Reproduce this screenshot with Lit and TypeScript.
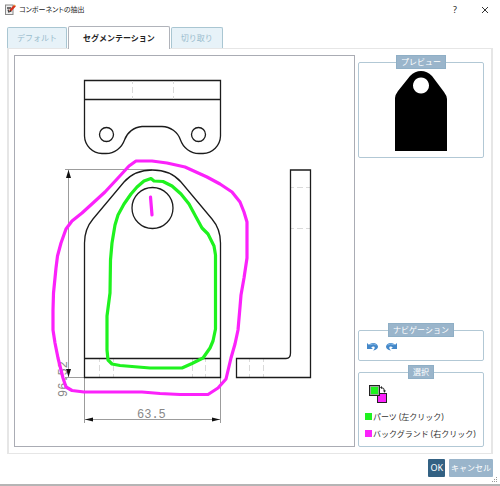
import { LitElement, html, css, svg } from "lit";
import { customElement, state } from "lit/decorators.js";

const UI_FONT = css`"Noto Sans", "Noto Sans CJK JP", sans-serif`;

/** Orthographic drawing with the user's brush strokes over it. */
@customElement("drawing-canvas")
class DrawingCanvas extends LitElement {
  static styles = css`
    :host { display: flex; border: 1px solid #aaacb4; background: #fff; min-width: 0; }
    .sheet { flex: 1; width: 100%; min-height: 0; display: block; }
    .edge { fill: none; stroke: #1c1c1c; stroke-width: 1.3; }
    .hidden { fill: none; stroke: #dadada; stroke-width: 1; stroke-dasharray: 6 3; stroke-dashoffset: 3; }
    .dim { fill: none; stroke: #9c9c9c; stroke-width: 1; }
    .arrow { fill: #111; }
    .label { font: 12px "Liberation Mono", monospace; fill: #888; }
    .stroke { fill: none; stroke-width: 3.2; stroke-linejoin: round; stroke-linecap: round; }
    .part { stroke: #1ff21f; }
    .ground { stroke: #fb22fb; }
  `;

  render() {
    return html`
      <svg class="sheet" viewBox="15 56 339 390" role="img" aria-label="96.52 × 63.5">
        ${svg`
        <path class="edge" d="M84.5 80.5H220.5V136A18 18 0 0 1 203 153.5H199A20 20 0 0 1 180.5 140A20 20 0 0 0 162 126.5H142A20 20 0 0 0 124.5 140A20 20 0 0 1 106 153.5H102A18 18 0 0 1 84.5 136ZM84.5 99.5H220.5"/>
        <circle class="edge" cx="106.5" cy="134.5" r="7"/>
        <circle class="edge" cx="198.5" cy="134.5" r="7"/>
        <path class="hidden" d="M132.5 81V99M173.5 81V99"/>
        <path class="hidden" d="M99.5 359V377M113.5 359V377M192.5 359V377M205.5 359V377M249.5 359V377M263.5 359V377"/>
        <path class="hidden" d="M291 187.5H310M291 228.5H310"/>
        <path class="dim" d="M65 169.5H152M65 377.5H84M68.5 170V377M84.5 378V423M220.5 378V423M85 419.5H220"/>
        <path class="edge" d="M84.5 377.5V243Q84.5 229 93 219L124 182C131 174 141 170 152.5 170S174 174 181 182L212 219Q220.5 229 220.5 243V377.5ZM84.5 358.5H220.5"/>
        <circle class="edge" cx="152.5" cy="208" r="20.5"/>
        <path class="edge" d="M290.5 170H310.5V377.5H236.5V358.5H286Q290.5 358.5 290.5 353Z"/>
        <path class="arrow" d="M68.5 170L71 178H66ZM68.5 377L71 369H66ZM85 419.5L93 417.5V421.5ZM220 419.5L212 417.5V421.5Z"/>
        <text class="label" x="137" y="418">63.5</text>
        <text class="label" transform="translate(67 397) rotate(-90)">96.52</text>
        <path class="stroke ground" d="M136 161L152 161L167 163L185 167L196 172L207 177L220 184L232 192L240 202L244 212L247 222V258L244 278L241 295L240 307L238 330L235 344L231 358L226 379L218 388L208 394.5H180L160 393.5L142 392H84L72 390.5L66 387L63 378L58 358L55 343L53 330V310L53.5 293L56 268L57.5 256L61 243L66 229L72 221L82 213L93 203L105 192L118 178L129 166Z"/>
        <path class="stroke part" d="M151 178.5L144 181L137 187L131 194L124 204L118 215L115 225L112 243L110.5 260L110 293L107 316V350L108 360L112 364L120 365.5L150 368H182L192 363.5L203 358L210 348L213 341L215.5 329V255L214 246L208 234L202 228L196 217L189 204L181 194L172 186L163 181.5L154 181Z"/>
        <path class="stroke ground" d="M150.5 197L152 215"/>
        `}
      </svg>
    `;
  }
}

@customElement("app-root")
class AppRoot extends LitElement {
  @state() private tab = 1;
  private tabs = ["デフォルト", "セグメンテーション", "切り取り"];

  static styles = css`
    :host {
      display: flex; flex-direction: column; box-sizing: border-box; min-height: 100vh;
      background: #fff; color: #333; border-bottom: 2px solid #b5b5b5;
      font: 8px/12px ${UI_FONT};
    }
    button { font: inherit; color: inherit; border: 0; padding: 0; background: none; cursor: pointer; }
    svg { display: block; }

    .titlebar { display: flex; align-items: center; gap: 3px; height: 19px; padding: 0 10px 0 5px; }
    .title { flex: 1; margin: 0; font: inherit; font-size: 7px; color: #222; font-feature-settings: "palt"; }
    .window-buttons { display: flex; gap: 20px; align-items: center; }
    .window-buttons button { width: 10px; height: 12px; color: #222; font-size: 9px; display: grid; place-items: center; }

    .tabs { display: flex; align-items: flex-end; gap: 1px; padding: 7px 7px 0; }
    .tab {
      height: 21px; padding: 0 9px; background: #e7f2f8; color: #9abccd;
      border: 1px solid #a9c6d2; border-bottom: 0; border-radius: 2px 2px 0 0;
    }
    .tab.active {
      height: 23px; padding: 0 14px; background: #fff; color: #222; font-weight: 700;
      border-color: #b0b3ba; margin-bottom: -1px; position: relative;
    }

    .panel {
      flex: 1; display: grid; grid-template-columns: minmax(0, 1fr) 126px; gap: 3px;
      margin: 0 7px; padding: 6px 7px 6px 5px; border: 1px solid #e6e6e6; border-width: 1px 2px;
    }
    .side { display: flex; flex-direction: column; gap: 4px; }
    .spacer { flex: 1; }
    fieldset { margin: 0; min-width: 0; border: 1px solid #b2c8d5; border-radius: 2px; padding: 0 6px; }
    legend {
      margin: 0 auto; padding: 0 4px; background: #9ab5cb; border: 1px solid #8fafc6;
      color: #fff; line-height: 12px;
    }
    .preview { padding: 2px 0 6px; }
    .preview svg { margin: 0 auto; }
    .nav { display: flex; gap: 8px; padding: 5px 2px 9px; }
    .swap { padding: 6px 4px 5px; display: block; }
    .keys { list-style: none; margin: 0; padding: 0 0 4px; }
    .key { display: flex; align-items: center; gap: 1px; height: 17px; white-space: nowrap; }
    .swatch { width: 7px; height: 7px; flex: none; }
    .swatch.part { background: #1ff21f; }
    .swatch.ground { background: #fb22fb; }

    .footer { display: flex; justify-content: flex-end; gap: 4px; padding: 5px 7px 0; }
    .footer button { height: 18px; padding: 0 2px; border-radius: 1px; color: #fff; }
    .footer .ok { background: #336183; font-size: 9px; }
    .footer .cancel { background: #9ab5cb; }
    .grip { align-self: flex-end; margin: 0 2px 1px 0; }
  `;

  render() {
    return html`
      <header class="titlebar">
        <svg width="11" height="11" viewBox="0 0 11 11" aria-hidden="true">
          <rect x="0.5" y="1" width="7.5" height="9.5" fill="#eee" stroke="#888" />
          <path d="M2 4h4M3 5.5l1 3" stroke="#444" stroke-width="1.3" />
          <path d="M10 1.5L5 7" stroke="#d8301c" stroke-width="2.4" />
          <path d="M8.2 2.2L9.8 0.6L10.8 1.8" fill="#e9a23b" />
          <path d="M5.5 6L3.5 8.5L6.5 7.5Z" fill="#333" />
        </svg>
        <h1 class="title">コンポーネントの抽出</h1>
        <div class="window-buttons">
          <button aria-label="ヘルプ">?</button>
          <button aria-label="閉じる">
            <svg width="8" height="8" viewBox="0 0 8 8"><path d="M1 1L7 7M7 1L1 7" stroke="#333" /></svg>
          </button>
        </div>
      </header>

      <nav class="tabs" role="tablist">
        ${this.tabs.map((label, i) => html`
          <button class="tab ${i === this.tab ? "active" : ""}" role="tab"
            aria-selected=${i === this.tab} @click=${() => (this.tab = i)}>${label}</button>`)}
      </nav>

      <main class="panel">
        <drawing-canvas></drawing-canvas>
        <div class="side">
          <fieldset>
            <legend>プレビュー</legend>
            <div class="preview">
              <svg width="52" height="80" viewBox="0 0 52 80" aria-hidden="true">
                <path fill-rule="evenodd" d="M0 80V27Q0 24 3 20L15 5Q20 0 26 0T37 5L49 21Q52 25 52 28V80ZM26 6.5a8 8 0 1 0 0.01 0Z" />
              </svg>
            </div>
          </fieldset>
          <div class="spacer"></div>
          <fieldset>
            <legend>ナビゲーション</legend>
            <div class="nav">
              <button aria-label="元に戻す">
                <svg width="11" height="9" viewBox="0 0 11 9">
                  <path d="M0 1V7H6L4.2 5.4Q6 3.8 7.4 4.8Q8.400 6.300 6 8.600Q11 7.600 11 4.500Q10.200 0.800 6 0.900Q3.600 1 1.900 2.700Z" fill="#4488c9" />
                  <path d="M3 2.800Q6.500 1 9.300 3" fill="none" stroke="#86b9e6" stroke-width="0.900" />
                </svg>
              </button>
              <button aria-label="やり直し">
                <svg width="11" height="9" viewBox="0 0 11 9">
                  <path d="M11 1V7H5L6.800 5.400Q5 3.800 3.600 4.800Q2.600 6.300 5 8.600Q0 7.600 0 4.500Q0.800 0.800 5 0.900Q7.400 1 9.100 2.700Z" fill="#4488c9" />
                  <path d="M8 2.800Q4.500 1 1.700 3" fill="none" stroke="#86b9e6" stroke-width="0.900" />
                </svg>
              </button>
            </div>
          </fieldset>
          <fieldset>
            <legend>選択</legend>
            <button class="swap" aria-label="色を入れ替え">
              <svg width="18" height="18" viewBox="0 0 18 18">
                <rect x="8.5" y="8.5" width="9" height="9" fill="#fb22fb" stroke="#222" />
                <rect x="0.5" y="0.5" width="10" height="10" fill="#1ff21f" stroke="#222" />
                <rect x="1.5" y="1.5" width="8" height="8" fill="none" stroke="#9aa89a" />
                <path d="M12 2.5Q15.5 2.5 15.5 6" fill="none" stroke="#222" />
                <path d="M11 2.5L13 1V4ZM15.5 7.8L14 5.5H17Z" fill="#222" />
              </svg>
            </button>
            <ul class="keys">
              <li class="key"><span class="swatch part"></span>パーツ (左クリック)</li>
              <li class="key"><span class="swatch ground"></span>バックグランド (右クリック)</li>
            </ul>
          </fieldset>
        </div>
      </main>

      <footer class="footer">
        <button class="ok">OK</button>
        <button class="cancel">キャンセル</button>
      </footer>
      <svg class="grip" width="6" height="6" viewBox="0 0 6 6" aria-hidden="true">
        <path d="M4 0h1v1H4ZM2 2h1v1H2ZM4 2h1v1H4ZM0 4h1v1H0ZM2 4h1v1H2ZM4 4h1v1H4Z" fill="#999" />
      </svg>
    `;
  }
}
